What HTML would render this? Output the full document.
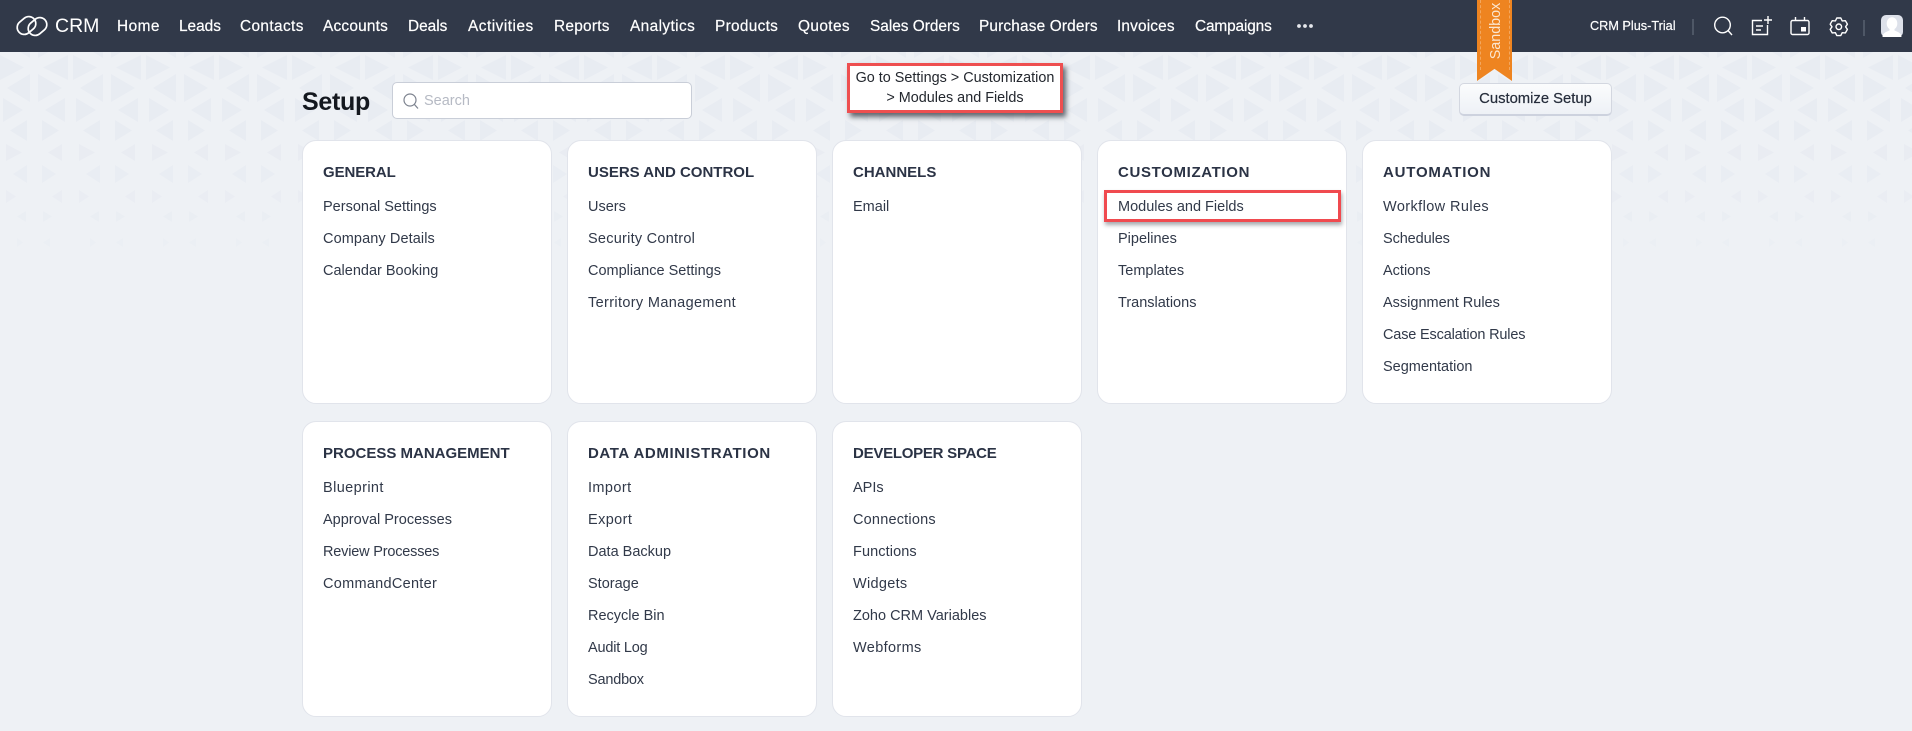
<!DOCTYPE html>
<html lang="en">
<head>
<meta charset="utf-8">
<title>Setup</title>
<style>
html,body{margin:0;padding:0;width:1912px;height:731px;overflow:hidden;background:#eef1f5;font-family:"Liberation Sans",sans-serif;color:#313949}
*{box-sizing:border-box}
#bg{position:absolute;left:0;top:0}
header{position:absolute;left:0;top:0;width:1912px;height:52px;background:#313949}
header a{position:absolute;top:16px;line-height:22px;font-size:15.4px;color:#fff;-webkit-text-stroke:.2px #fff;white-space:nowrap}
.crm{position:absolute;left:55px;top:14px;line-height:24px;font-size:19.5px;color:#fff}
.plan{position:absolute;left:1590px;top:15px;line-height:22px;font-size:12.7px;color:#fff;-webkit-text-stroke:.2px #fff;white-space:nowrap}
.sep{position:absolute;width:2px;background:#4e5766;top:19px;height:16px}
.ribbon{position:absolute;left:1477px;top:0;width:35px;height:81px;background:#ee8420;clip-path:polygon(0 0,100% 0,100% 100%,50% 85%,0 100%)}
.ribbon:before{content:"";position:absolute;left:2.5px;right:2.5px;top:0;bottom:11px;border-left:1px dashed #f3a75e;border-right:1px dashed #f3a75e}
.ribbon span{position:absolute;left:18.5px;top:31px;transform:translate(-50%,-50%) rotate(-90deg);font-size:14.3px;line-height:18px;color:#fbe6d0;white-space:nowrap}
h1{position:absolute;left:302px;top:85px;margin:0;font-size:25px;line-height:34px;font-weight:bold;color:#14181f;letter-spacing:-.3px}
.search{position:absolute;left:392px;top:82px;width:300px;height:37px;background:#fff;border:1px solid #c9ced8;border-radius:5px}
.search svg{position:absolute;left:9px;top:9px}
.search span{position:absolute;left:31px;top:8px;line-height:21px;font-size:14.5px;color:#b6bac4}
.btn{position:absolute;left:1459px;top:83px;width:153px;height:33px;background:linear-gradient(#fbfcfd,#eef1f6);border:1px solid #d3d7e0;border-bottom:2px solid #cdd2de;border-radius:5px;text-align:center;line-height:31px;font-size:14.8px;color:#262d3b;-webkit-text-stroke:.2px #262d3b}
.note{position:absolute;left:847px;top:63px;width:216px;height:50px;background:#fff;border:3px solid #ee4f50;box-shadow:3px 4px 5px rgba(50,55,65,.75);text-align:center;font-size:14.4px;line-height:19.5px;padding-top:3px;color:#23272e;white-space:nowrap}
.card{position:absolute;width:250px;background:#fff;border:1px solid #e1e4eb;border-radius:14px}
.r1{top:140px;height:264px}
.r2{top:421px;height:296px}
.card h3{position:absolute;left:20px;top:22px;margin:0;font-size:15px;line-height:20px;font-weight:bold;color:#2b3345;white-space:nowrap}
.card ul{position:absolute;left:20px;top:50px;margin:0;padding:0;list-style:none}
.card li{line-height:32px;height:32px;font-size:14.5px;color:#313949;white-space:nowrap}
.hl{position:absolute;left:1104px;top:190px;width:237px;height:32px;border:3px solid #f04a4f;box-shadow:1px 3px 4px rgba(60,65,75,.45)}
</style>
</head>
<body>
<svg id="bg" width="1912" height="260" viewBox="0 0 1912 260" xmlns="http://www.w3.org/2000/svg">
<defs>
<pattern id="r0" patternUnits="userSpaceOnUse" x="0" y="30" width="73" height="28"><polygon points="30,0 30,28 7,14" fill="#e6eaf1"/><polygon points="38,0 38,28 62,14" fill="#e6eaf1"/></pattern>
<pattern id="r1" patternUnits="userSpaceOnUse" x="0" y="55" width="73" height="25"><polygon points="0,0 0,25 24,12.5" fill="#e6eaf1"/><polygon points="68,0 68,25 43,12.5" fill="#e6eaf1"/></pattern>
<pattern id="r2" patternUnits="userSpaceOnUse" x="0" y="74" width="73" height="28"><polygon points="30,0 30,28 7,14" fill="#e6eaf1"/><polygon points="38,0 38,28 62,14" fill="#e6eaf1"/></pattern>
<pattern id="r3" patternUnits="userSpaceOnUse" x="0" y="98" width="73" height="24"><polygon points="3,0 3,24 23,12" fill="#e6eaf1"/><polygon points="65,0 65,24 45,12" fill="#e6eaf1"/></pattern>
<pattern id="r4" patternUnits="userSpaceOnUse" x="0" y="120" width="73" height="21"><polygon points="27,0 27,21 10,10.5" fill="#e6eaf1"/><polygon points="42,0 42,21 59,10.5" fill="#e6eaf1"/></pattern>
<pattern id="r5" patternUnits="userSpaceOnUse" x="0" y="144" width="73" height="17"><polygon points="6,0 6,17 22,8.5" fill="#e6eaf1"/><polygon points="62,0 62,17 48,8.5" fill="#e6eaf1"/></pattern>
<pattern id="r6" patternUnits="userSpaceOnUse" x="0" y="165" width="73" height="18"><polygon points="27,0 27,18 13,9" fill="#e6eaf1"/><polygon points="42,0 42,18 56,9" fill="#e6eaf1"/></pattern>
<pattern id="r7" patternUnits="userSpaceOnUse" x="0" y="190" width="73" height="13"><polygon points="6,0 6,13 16,6.5" fill="#e6eaf1"/><polygon points="62,0 62,13 52,6.5" fill="#e6eaf1"/></pattern>
<pattern id="r8" patternUnits="userSpaceOnUse" x="0" y="211" width="73" height="11"><polygon points="26,0 26,11 17,5.5" fill="#e6eaf1"/><polygon points="43,0 43,11 52,5.5" fill="#e6eaf1"/></pattern>
<pattern id="r9" patternUnits="userSpaceOnUse" x="0" y="238" width="73" height="9"><polygon points="17,0 17,9 23,4.5" fill="#e6eaf1"/><polygon points="50,0 50,9 43,4.5" fill="#e6eaf1"/></pattern>
</defs>
<rect x="0" y="30" width="1912" height="28" fill="url(#r0)" opacity=".7"/>
<rect x="0" y="55" width="1912" height="25" fill="url(#r1)" opacity=".75"/>
<rect x="0" y="74" width="1912" height="28" fill="url(#r2)" opacity=".75"/>
<rect x="0" y="98" width="1912" height="24" fill="url(#r3)" opacity=".7"/>
<rect x="0" y="120" width="1912" height="21" fill="url(#r4)" opacity=".7"/>
<rect x="0" y="144" width="1912" height="17" fill="url(#r5)" opacity=".65"/>
<rect x="0" y="165" width="1912" height="18" fill="url(#r6)" opacity=".6"/>
<rect x="0" y="190" width="1912" height="13" fill="url(#r7)" opacity=".55"/>
<rect x="0" y="211" width="1912" height="11" fill="url(#r8)" opacity=".45"/>
<rect x="0" y="238" width="1912" height="9" fill="url(#r9)" opacity=".35"/>
</svg>

<header>
<svg width="60" height="52" style="position:absolute;left:0;top:0" fill="none" stroke="#fff" stroke-width="1.7">
<rect x="16.5" y="18.5" width="20" height="14" rx="7" transform="rotate(-40 26.5 25.5)"/>
<rect x="27.5" y="19.5" width="20" height="14" rx="7" transform="rotate(-40 37.5 26.5)"/>
</svg>
<span class="crm">CRM</span>
<a style="left:117px;letter-spacing:.45px">Home</a>
<a style="left:179px">Leads</a>
<a style="left:240px;letter-spacing:.38px">Contacts</a>
<a style="left:323px;letter-spacing:.22px">Accounts</a>
<a style="left:408px">Deals</a>
<a style="left:468px;letter-spacing:.5px">Activities</a>
<a style="left:554px;letter-spacing:.26px">Reports</a>
<a style="left:630px;letter-spacing:.4px">Analytics</a>
<a style="left:715px;letter-spacing:.3px">Products</a>
<a style="left:798px;letter-spacing:.4px">Quotes</a>
<a style="left:870px">Sales Orders</a>
<a style="left:979px;letter-spacing:.16px">Purchase Orders</a>
<a style="left:1117px;letter-spacing:.15px">Invoices</a>
<a style="left:1195px;letter-spacing:-.13px">Campaigns</a>
<svg width="20" height="6" style="position:absolute;left:1296px;top:23px" fill="#e6e8ec"><circle cx="3" cy="3" r="1.9"/><circle cx="9" cy="3" r="1.9"/><circle cx="15" cy="3" r="1.9"/></svg>
<span class="plan">CRM Plus-Trial</span>
<i class="sep" style="left:1692px"></i>
<svg width="140" height="52" viewBox="1710 0 140 52" style="position:absolute;left:1710px;top:0" fill="none" stroke="#fff" stroke-width="1.4">
<circle cx="1722.5" cy="25" r="7.8"/><path d="M1728 30.5L1732 35"/>
<path d="M1762 20.5H1752.5V34.5H1767.5V25"/><path d="M1756 26H1763M1756 30H1761"/><path d="M1768 16V24M1764 20H1772"/>
<rect x="1791" y="20.5" width="18" height="14" rx="1.5"/><path d="M1795.5 17V21M1804.5 17V21"/><rect x="1801" y="27" width="5" height="4.5" fill="#fff" stroke="none"/>
<g transform="translate(1838.8 26.8)"><path stroke-linejoin="round" d="M-2 -8.8L2 -8.8L3.4 -5.9L6.6 -6.1L8.6 -2.6L6.8 0L8.6 2.6L6.6 6.1L3.4 5.9L2 8.8L-2 8.8L-3.4 5.9L-6.6 6.1L-8.6 2.6L-6.8 0L-8.6 -2.6L-6.6 -6.1L-3.4 -5.9Z"/><circle r="2.8"/></g>
</svg>
<i class="sep" style="left:1863px;top:20px"></i>
<svg width="22" height="22" viewBox="0 0 22 22" style="position:absolute;left:1881px;top:15px"><rect width="22" height="22" rx="5" fill="#dde1ea"/><ellipse cx="11" cy="8.5" rx="5.3" ry="6.3" fill="#fff"/><path d="M1.5 22C1.5 18 5 17 8.5 15.5V13H13.5V15.5C17 17 20.5 18 20.5 22Z" fill="#fff"/></svg>
</header>

<div class="ribbon"><span>Sandbox</span></div>

<h1>Setup</h1>
<div class="search">
<svg width="18" height="18" fill="none" stroke="#7d838f" stroke-width="1.2"><circle cx="8" cy="8" r="6"/><path d="M12.3 12.3L16 16.5"/></svg>
<span>Search</span>
</div>
<div class="btn">Customize Setup</div>
<div class="note">Go to Settings &gt; Customization<br>&gt; Modules and Fields</div>

<section class="card r1" style="left:302px"><h3 style="letter-spacing:-.1px">GENERAL</h3><ul><li>Personal Settings</li><li style="letter-spacing:.1px">Company Details</li><li>Calendar Booking</li></ul></section>
<section class="card r1" style="left:567px"><h3>USERS AND CONTROL</h3><ul><li>Users</li><li style="letter-spacing:.25px">Security Control</li><li>Compliance Settings</li><li style="letter-spacing:.35px">Territory Management</li></ul></section>
<section class="card r1" style="left:832px"><h3>CHANNELS</h3><ul><li>Email</li></ul></section>
<section class="card r1" style="left:1097px"><h3 style="letter-spacing:.65px">CUSTOMIZATION</h3><ul><li>Modules and Fields</li><li>Pipelines</li><li>Templates</li><li>Translations</li></ul></section>
<section class="card r1" style="left:1362px"><h3 style="letter-spacing:.8px">AUTOMATION</h3><ul><li style="letter-spacing:.4px">Workflow Rules</li><li style="letter-spacing:-.1px">Schedules</li><li>Actions</li><li>Assignment Rules</li><li style="letter-spacing:-.17px">Case Escalation Rules</li><li>Segmentation</li></ul></section>
<section class="card r2" style="left:302px"><h3>PROCESS MANAGEMENT</h3><ul><li style="letter-spacing:.4px">Blueprint</li><li>Approval Processes</li><li style="letter-spacing:-.19px">Review Processes</li><li style="letter-spacing:.28px">CommandCenter</li></ul></section>
<section class="card r2" style="left:567px"><h3 style="letter-spacing:.6px">DATA ADMINISTRATION</h3><ul><li style="letter-spacing:.4px">Import</li><li style="letter-spacing:.4px">Export</li><li>Data Backup</li><li>Storage</li><li>Recycle Bin</li><li style="letter-spacing:-.2px">Audit Log</li><li style="letter-spacing:-.2px">Sandbox</li></ul></section>
<section class="card r2" style="left:832px"><h3 style="letter-spacing:-.25px">DEVELOPER SPACE</h3><ul><li>APIs</li><li style="letter-spacing:.2px">Connections</li><li style="letter-spacing:.1px">Functions</li><li style="letter-spacing:.3px">Widgets</li><li>Zoho CRM Variables</li><li style="letter-spacing:.35px">Webforms</li></ul></section>
<div class="hl"></div>
</body>
</html>
